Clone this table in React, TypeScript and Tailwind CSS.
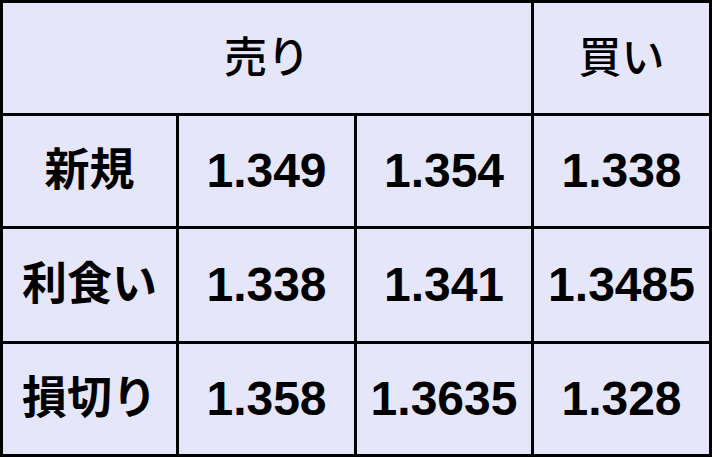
import { Fragment } from "react"

const rows = [
  { label: "新規", values: ["1.349", "1.354", "1.338"] },
  { label: "利食い", values: ["1.338", "1.341", "1.3485"] },
  { label: "損切り", values: ["1.358", "1.3635", "1.328"] },
]

const jp = "font-['Liberation_Sans','Noto_Sans_CJK_JP',sans-serif]"

export default function App() {
  return (
    <div
      className={`grid h-[457px] w-[712px] grid-cols-[173px_175px_174px_175px] grid-rows-[110px_110px_112px_110px] gap-[3px] bg-black p-[3px] text-black ${jp}`}
    >
      {/* header */}
      <div className="col-span-3 flex items-center justify-center bg-[#e6e6fa] text-[43px] font-medium">
        {"売り"}
      </div>
      <div className="flex items-center justify-center bg-[#e6e6fa] text-[43px] font-medium">
        {"買い"}
      </div>

      {rows.map((row) => (
        <Fragment key={row.label}>
          <div className="flex items-center justify-center bg-[#e6e6fa] text-[45px] font-bold">
            {row.label}
          </div>
          {row.values.map((v, i) => (
            <div
              key={i}
              className="flex items-center justify-center bg-[#e6e6fa] text-[48px] font-bold"
            >
              {v}
            </div>
          ))}
        </Fragment>
      ))}
    </div>
  )
}
